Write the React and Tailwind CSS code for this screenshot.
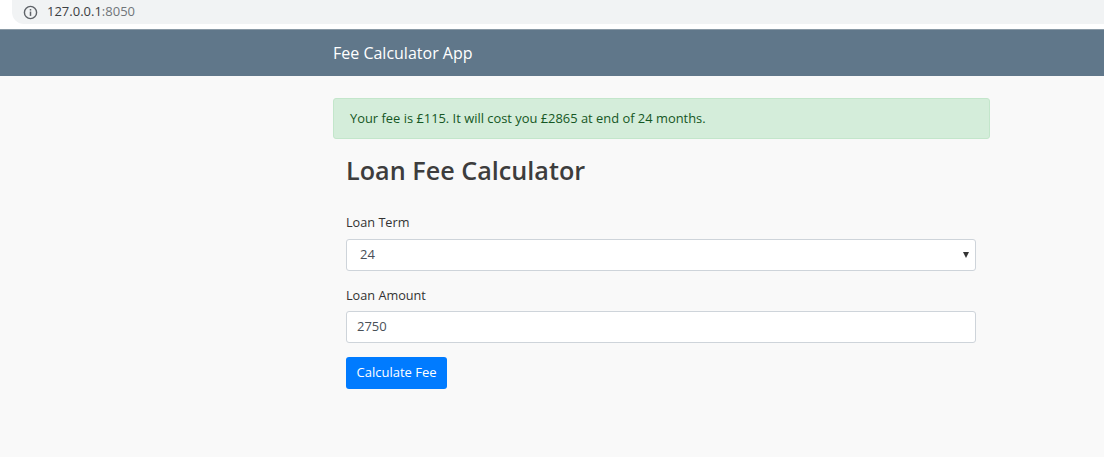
export default function App() {
  return (
    <div className="w-[1104px] h-[457px] bg-[#f9f9f9] overflow-hidden" style={{ fontFamily: '"Open Sans", "Noto Sans", sans-serif' }}>
      {/* browser address strip */}
      <div className="h-[29px] bg-white">
        <div className="ml-[12px] h-[24px] bg-[#f1f3f4] rounded-bl-[12px] flex items-center pl-[11px]">
          <svg width="15" height="15" viewBox="0 0 16 16" className="shrink-0">
            <circle cx="8" cy="8" r="6.5" fill="none" stroke="#5f6368" strokeWidth="1.5" />
            <rect x="7.2" y="7" width="1.6" height="4.6" fill="#5f6368" />
            <rect x="7.2" y="4.3" width="1.6" height="1.6" fill="#5f6368" />
          </svg>
          <span className="ml-[9px] text-[13px] text-[#3c4043]">
            127.0.0.1<span className="text-[#70757a]">:8050</span>
          </span>
        </div>
      </div>

      {/* navbar */}
      <nav className="h-[47px] bg-[#60778a] border-t border-[#8a9aa6] flex items-center">
        <span className="ml-[333px] text-white text-[16px]">Fee Calculator App</span>
      </nav>

      <div className="ml-[333px] w-[657px] pt-[22px]">
        <div className="h-[41px] bg-[#d4edda] border border-[#c3e6cb] rounded-[3px] flex items-center px-[16px] text-[12.9px] text-[#155724]">
          Your fee is £115. It will cost you £2865 at end of 24 months.
        </div>

        <div className="pl-[13px] pr-[14px] text-[#333]">
          <h2 className="mt-[13px] h-[36px] text-[25.2px] leading-[36px] font-semibold text-[#3d3d3d]">Loan Fee Calculator</h2>

          <label className="block mt-[25px] text-[12.7px] leading-[18px] text-[#333]">Loan Term</label>
          <div className="mt-[8px] h-[32px] bg-white border border-[#ced4da] rounded-[3px] flex items-center justify-between pl-[13px] pr-[6px] text-[13px] text-[#495057]">
            <span>24</span>
            <span className="w-0 h-0 border-l-[3.5px] border-r-[3.5px] border-t-[6px] border-l-transparent border-r-transparent border-t-[#333]"></span>
          </div>

          <label className="block mt-[15px] text-[12.7px] leading-[18px] text-[#333]">Loan Amount</label>
          <div className="mt-[7px] h-[32px] bg-white border border-[#ced4da] rounded-[3px] flex items-center pl-[10px] text-[13px] text-[#495057]">
            2750
          </div>

          <button className="mt-[14px] h-[32px] px-[10.5px] bg-[#007bff] text-white text-[13px] rounded-[3px]">
            Calculate Fee
          </button>
        </div>
      </div>
    </div>
  )
}
